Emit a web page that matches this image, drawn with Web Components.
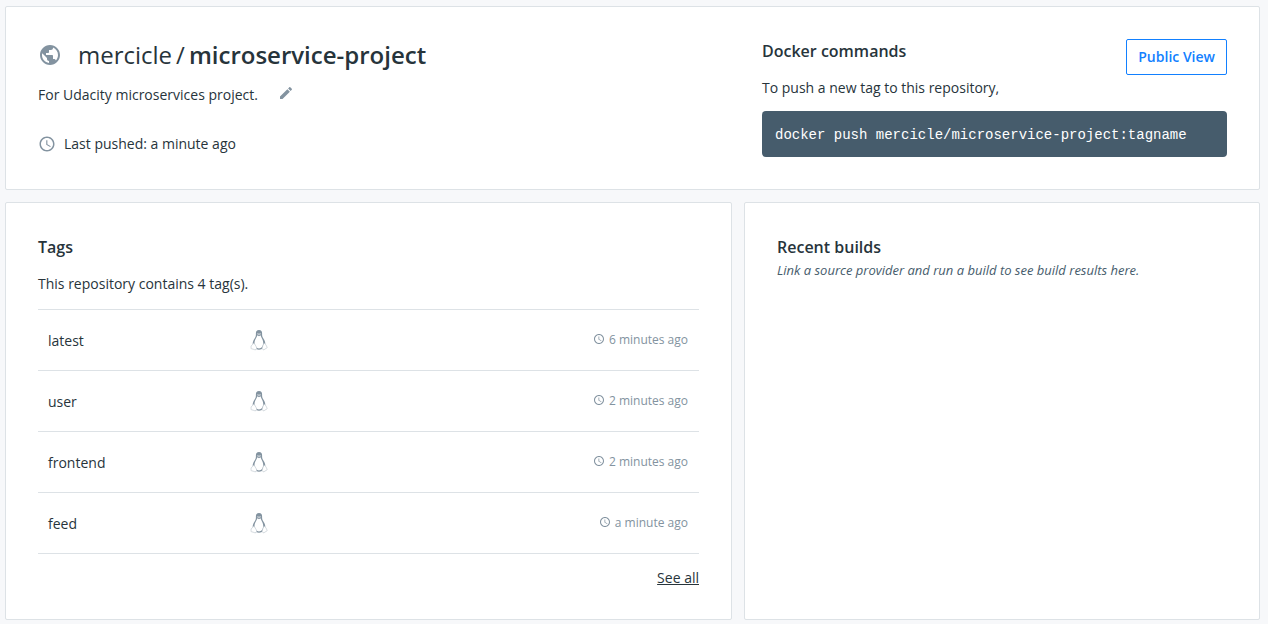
<!DOCTYPE html>
<html lang="en">
<head>
<meta charset="utf-8">
<title>mercicle/microservice-project</title>
<style>
  body { margin: 0; background: #f7f8fa; color: #27343b; font: 14px/20px "Open Sans", sans-serif; }
</style>
</head>
<body>
<repo-page></repo-page>
<script>
const define = (name, html, setup) => {
  const template = document.createElement('template');
  template.innerHTML = html;
  customElements.define(name, class extends HTMLElement {
    constructor() {
      super();
      this.attachShadow({ mode: 'open' }).append(template.content.cloneNode(true));
    }
    connectedCallback() { if (setup) setup(this, this.shadowRoot); }
  });
};

const ICONS = {
  globe: ['0 0 24 24', '<path fill="currentColor" d="M12 2C6.48 2 2 6.48 2 12s4.48 10 10 10 10-4.48 10-10S17.52 2 12 2zm-1 17.93c-3.95-.49-7-3.85-7-7.93 0-.62.08-1.21.21-1.79L9 15v1c0 1.1.9 2 2 2v1.93zm6.9-2.54c-.26-.81-1-1.39-1.9-1.39h-1v-3c0-.55-.45-1-1-1H8v-2h2c.55 0 1-.45 1-1V7h2c1.1 0 2-.9 2-2v-.41c2.93 1.19 5 4.06 5 7.41 0 2.08-.8 3.97-2.1 5.39z"/>'],
  clock: ['0 0 24 24', '<path fill="currentColor" d="M11.99 2C6.47 2 2 6.48 2 12s4.47 10 9.99 10C17.52 22 22 17.52 22 12S17.52 2 11.99 2zM12 20c-4.42 0-8-3.58-8-8s3.58-8 8-8 8 3.58 8 8-3.58 8-8 8zm.5-13H11v6l5.250 3.150.750-1.230-4.500-2.670z"/>'],
  pencil: ['0 0 24 24', '<path fill="currentColor" d="M3 17.250V21h3.750L17.810 9.940l-3.750-3.750L3 17.250zM20.710 7.040c.39-.39.39-1.020 0-1.410l-2.340-2.340c-.39-.39-1.020-.39-1.410 0l-1.830 1.830 3.750 3.750 1.830-1.830z"/>'],
  linux: ['0 0 20 22', '<path fill="currentColor" d="M10 1C7.600 1 6.800 2.600 6.900 4.500c.1 2.500-.3 3.500-1.600 5.400C4.200 11.600 3.500 13.400 3.800 15.300l2.400 3.900c1 1.900 6.600 1.900 7.600 0l2.400-3.900c.3-1.900-.4-3.700-1.500-5.400-1.300-1.900-1.700-2.900-1.600-5.400C13.200 2.600 12.400 1 10 1z"/><path fill="#fff" d="M8.300 6.300 10 7.200l1.600-.9c.2 1.700 2.900 4.600 2.700 8.300-.1 2.600-1.800 4.800-4.300 4.800s-4.400-2.200-4.500-4.800c-.2-3.700 2.600-6.600 2.800-8.300z"/><path fill="#fff" d="M8.200 4.400c.4-.7 1-.6 1.400 0h.8c.4-.6 1-.7 1.400 0l-.2 1.100-1.600.8-1.600-.8z" opacity=".5"/><path fill="#fff" stroke="#b4bec6" stroke-width=".6" d="M4.300 14.400c.7-.2 1.400.5 2.100 1.900.8 1.400 1.700 2.500 1.200 3.500-.6 1.300-2 1-3.100.5-1-.4-2.400-.3-2.500-1-.1-.6.3-1 .1-1.900-.1-1.300 1.700-1.200 2.200-3zM15.700 14.400c-.7-.2-1.300.6-1.700 2-.5 1.400-1.200 2.500-.7 3.500.7 1.300 1.900.9 2.800.1.8-.6 2.100-1 2.100-1.600 0-.7-.8-.8-.9-1.800-.1-.9-1-1-1.600-2.200z"/>']
};
define('hub-icon', `<style>
  :host { display: block; flex: none; color: #8393a0; }
  svg { display: block; width: 100%; height: 100%; }
</style>`, (el, root) => {
  const [box, art] = ICONS[el.getAttribute('name')];
  root.innerHTML += `<svg viewBox="${box}" aria-hidden="true">${art}</svg>`;
});

define('hub-card', `<style>
  :host { display: block; box-sizing: border-box; background: #fff; border: 1px solid #dde2e6; border-radius: 2px; padding: 32px 32px var(--card-bottom, 32px); }
</style><slot></slot>`);

define('section-title', `<style>
  h2 { margin: 0; font-size: 16px; line-height: 24px; font-weight: 600; }
  :host { display: block; }
</style><h2><slot></slot></h2>`);

define('repo-summary', `<style>
  :host { display: block; }
  h1 { display: flex; gap: 4px; margin: 0; font-size: 24px; line-height: 32px; font-weight: 400; }
  h1 b { font-weight: 600; }
  .name, .about, .pushed { display: flex; align-items: center; }
  .name { gap: 16px; }
  .about { gap: 20px; margin-top: 14px; align-items: flex-start; }
  .pushed { gap: 8px; margin-top: 29px; }
  .name hub-icon { width: 24px; height: 24px; }
  .pushed hub-icon { width: 18px; height: 18px; }
  button { padding: 0; border: 0; background: none; cursor: pointer; }
  button hub-icon { width: 16px; height: 16px; }
  p { margin: 0; }
</style>
<div class="name"><hub-icon name="globe"></hub-icon><h1><span>mercicle</span><span>/</span><b>microservice-project</b></h1></div>
<div class="about"><p>For Udacity microservices project.</p><button type="button" aria-label="Edit description"><hub-icon name="pencil"></hub-icon></button></div>
<div class="pushed"><hub-icon name="clock"></hub-icon><p>Last pushed: a minute ago</p></div>`);

define('docker-commands', `<style>
  :host { display: block; }
  .head { display: flex; justify-content: space-between; align-items: flex-start; }
  button { height: 36px; padding: 0 11px; border: 1px solid #1280ff; border-radius: 2px; background: #fff; color: #1280ff; font: 600 14px/20px "Open Sans", sans-serif; cursor: pointer; }
  p { margin: 0; }
  .intro { padding: 3px 0 13px; }
  pre { margin: 0; padding: 14px 13px 12px; border-radius: 4px; background: #465c6c; color: #fff; font: 14px/20px "Courier", "Liberation Mono", monospace; white-space: pre-wrap; }
</style>
<div class="head"><section-title>Docker commands</section-title><button type="button">Public View</button></div>
<p class="intro">To push a new tag to this repository,</p>
<pre>docker push mercicle/microservice-project:tagname</pre>`);

define('tag-list', `<style>
  :host { display: block; }
  p { margin: 0; padding: 15px 0; }
  table { width: 100%; border-collapse: collapse; table-layout: fixed; }
  tr { height: 61px; border-top: 1px solid #dde2e6; border-bottom: 1px solid #dde2e6; }
  td { padding: 0 11px 0 10px; }
  td:first-child { width: 180px; padding-top: 2px; }
  td:nth-child(2) { width: 100px; }
  .os { width: 20px; height: 22px; }
  .age { display: flex; justify-content: flex-end; align-items: flex-start; gap: 4px; color: #8393a0; font-size: 12px; line-height: 20px; }
  .age hub-icon { width: 12px; height: 12px; margin-top: 3px; }
  footer { margin-top: 14px; text-align: right; }
  a { color: inherit; text-decoration: underline; }
</style>
<section-title>Tags</section-title>
<p>This repository contains 4 tag(s).</p>
<table><tbody></tbody></table>
<footer><a href="#tags">See all</a></footer>`, (el, root) => {
  const tags = [['latest', '6 minutes ago'], ['user', '2 minutes ago'], ['frontend', '2 minutes ago'], ['feed', 'a minute ago']];
  root.querySelector('tbody').innerHTML = tags.map(([tag, age]) =>
    `<tr><td>${tag}</td><td><hub-icon class="os" name="linux"></hub-icon></td><td><div class="age"><hub-icon name="clock"></hub-icon><span>${age}</span></div></td></tr>`).join('');
});

define('recent-builds', `<style>
  :host { display: block; }
  p { margin: 0; padding-top: 1px; color: #465c6c; font-size: 13px; line-height: 20px; font-style: italic; }
</style>
<section-title>Recent builds</section-title>
<p>Link a source provider and run a build to see build results here.</p>`);

define('repo-page', `<style>
  :host { display: grid; gap: 12px; padding: 6px 8px 4px 5px; }
  .top { display: grid; grid-template-columns: 724fr 465fr; }
  .bottom { display: grid; grid-template-columns: 727fr 516fr; gap: 12px; --card-bottom: 31px; }
</style>
<hub-card><div class="top"><repo-summary></repo-summary><docker-commands></docker-commands></div></hub-card>
<main class="bottom"><hub-card><tag-list></tag-list></hub-card><hub-card><recent-builds></recent-builds></hub-card></main>`);
</script>
</body>
</html>
